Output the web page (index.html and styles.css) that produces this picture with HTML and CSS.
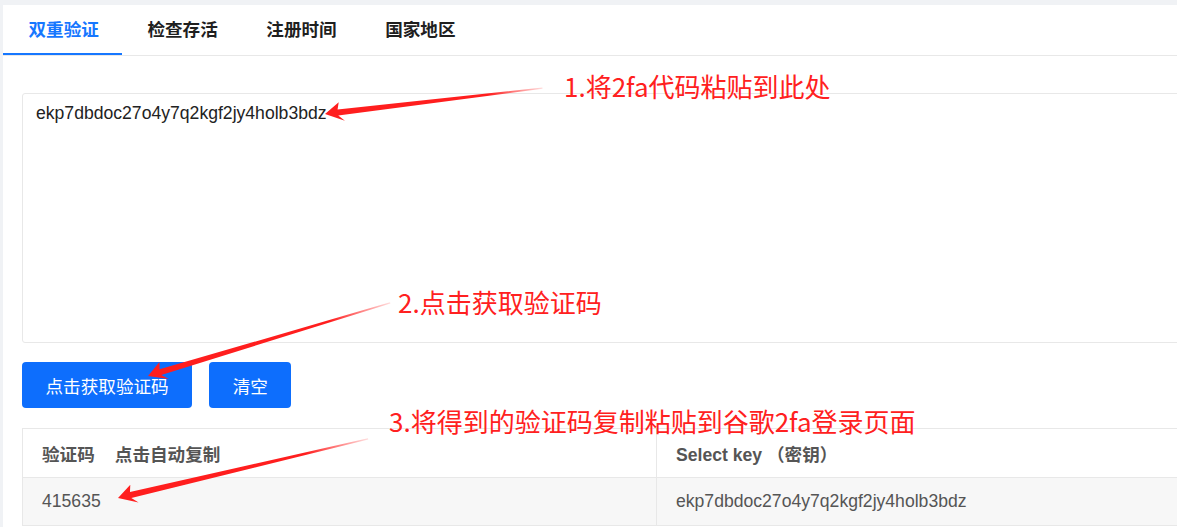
FILE: index.html
```html
<!DOCTYPE html>
<html>
<head>
    <meta charset="UTF-8">
    <meta name="viewport" content="width=device-width, initial-scale=1.0">
    <title>2FA 验证码</title>
    <link rel="stylesheet" href="styles.css">
</head>
<body>
    <div class="page">
        <div class="panel">
            <nav class="tabs">
                <div class="tab active">双重验证</div>
                <div class="tab">检查存活</div>
                <div class="tab">注册时间</div>
                <div class="tab">国家地区</div>
            </nav>

            <div class="content">
                <textarea class="code-input" spellcheck="false">ekp7dbdoc27o4y7q2kgf2jy4holb3bdz</textarea>

                <div class="actions">
                    <button class="btn">点击获取验证码</button>
                    <button class="btn">清空</button>
                </div>

                <table class="result">
                    <thead>
                        <tr>
                            <th class="col-code">验证码<span class="hint">点击自动复制</span></th>
                            <th>Select key （密钥）</th>
                        </tr>
                    </thead>
                    <tbody>
                        <tr>
                            <td>415635</td>
                            <td>ekp7dbdoc27o4y7q2kgf2jy4holb3bdz</td>
                        </tr>
                    </tbody>
                </table>
            </div>
        </div>

        <!-- annotations drawn over the screenshot -->
        <div class="notes">
            <svg class="arrows" width="1177" height="527" viewBox="0 0 1177 527">
                <defs>
                    <linearGradient id="fade" x1="0" y1="0" x2="1" y2="0">
                        <stop offset="0" stop-color="#ff1e1e"/>
                        <stop offset="0.75" stop-color="#ff1e1e"/>
                        <stop offset="1" stop-color="#ff1e1e" stop-opacity="0.15"/>
                    </linearGradient>
                </defs>
                <g transform="translate(325 109) rotate(-6.8)">
                    <polygon fill="url(#fade)" points="0,0 15,-10 13,-3 219,-0.6 219,0.6 13,3 19,9"/>
                </g>
                <g transform="translate(148 371) rotate(-16.8)">
                    <polygon fill="url(#fade)" points="0,0 15,-10 13,-3 253,-0.6 253,0.6 13,3 19,9"/>
                </g>
                <g transform="translate(118 493) rotate(-13.3)">
                    <polygon fill="url(#fade)" points="0,0 15,-10 13,-3 257,-0.6 257,0.6 13,3 19,9"/>
                </g>
            </svg>
            <div class="note note-1">1.将2fa代码粘贴到此处</div>
            <div class="note note-2">2.点击获取验证码</div>
            <div class="note note-3">3.将得到的验证码复制粘贴到谷歌2fa登录页面</div>
        </div>
    </div>
</body>
</html>
```

FILE: styles.css
```css
:root {
    --page-bg: #f0f2f5;
    --panel-bg: #ffffff;
    --line: #e8e8e8;
    --tab-text: #1f1f1f;
    --tab-active: #1677ff;
    --button-bg: #0d6efd;
    --table-text: #555555;
    --row-bg: #f7f7f7;
    --note-red: #ff2020;
}
html, body {
    margin: 0;
    height: 100%;
}
body {
    background-color: var(--page-bg);
    font-family: "Liberation Sans", "Noto Sans CJK SC", sans-serif;
    overflow: hidden;
}
.page {
    position: relative;
}
.panel {
    margin: 5px 0 0 3px;
    width: 1400px;
    min-height: 522px;
    background-color: var(--panel-bg);
}
.tabs {
    display: flex;
    border-bottom: 1px solid var(--line);
}
.tab {
    padding: 0 23px 0 25.5px;
    line-height: 48px;
    border-bottom: 2px solid transparent;
    font-family: "Noto Sans CJK SC", sans-serif;
    font-size: 17.6px;
    font-weight: 700;
    color: var(--tab-text);
}
.tab.active {
    color: var(--tab-active);
    border-bottom-color: var(--tab-active);
}
.content {
    padding: 37px 0 0 19px;
}
.code-input {
    display: block;
    width: 1290px;
    height: 250px;
    box-sizing: border-box;
    padding: 9px 13px;
    border: 1px solid var(--line);
    border-radius: 3px;
    font-family: "Liberation Sans", sans-serif;
    font-size: 17.6px;
    color: #222222;
    resize: none;
    outline: none;
}
.actions {
    display: flex;
    gap: 17px;
    margin-top: 19px;
}
.btn {
    height: 46px;
    padding: 0 23.5px;
    border: none;
    border-radius: 4px;
    background-color: var(--button-bg);
    color: #ffffff;
    font-family: "Noto Sans CJK SC", sans-serif;
    font-size: 17.6px;
    cursor: pointer;
}
.result {
    margin-top: 20px;
    width: 1290px;
    border-collapse: collapse;
    font-size: 17.6px;
    color: var(--table-text);
    text-align: left;
}
.result th,
.result td {
    border: 1px solid var(--line);
    padding: 0 0 0 19px;
}
.result th {
    height: 48px;
    font-weight: 700;
}
.result td {
    height: 47px;
    background-color: var(--row-bg);
}
.result .col-code {
    width: 614px;
}
.hint {
    margin-left: 20px;
}
.notes {
    position: absolute;
    top: 0;
    left: 0;
    width: 1177px;
    height: 527px;
    pointer-events: none;
}
.arrows {
    position: absolute;
    top: 0;
    left: 0;
}
.note {
    position: absolute;
    font-family: "Noto Sans CJK SC", sans-serif;
    font-size: 26px;
    line-height: 30px;
    color: var(--note-red);
    white-space: nowrap;
}
.note-1 {
    top: 66px;
    left: 564px;
}
.note-2 {
    top: 282px;
    left: 398px;
}
.note-3 {
    top: 401px;
    left: 389px;
}
```
